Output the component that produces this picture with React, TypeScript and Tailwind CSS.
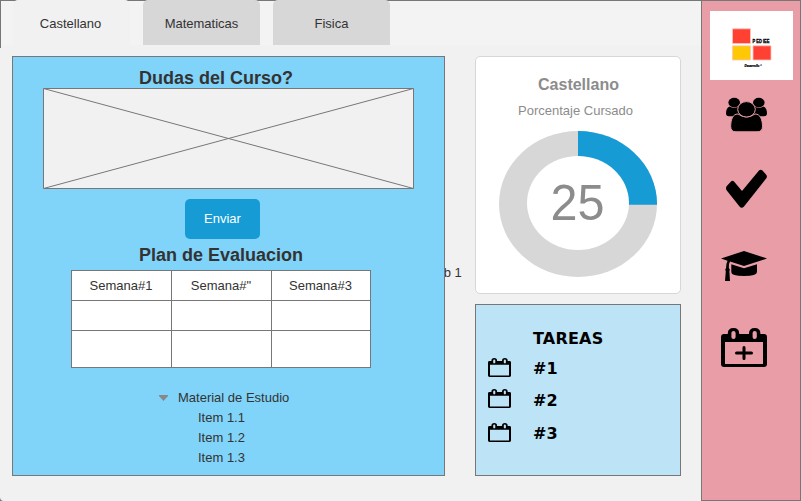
const tabs = ["Castellano", "Matematicas", "Fisica"];
const headings = ["Semana#1", 'Semana#"', "Semana#3"];
const items = ["Item 1.1", "Item 1.2", "Item 1.3"];

function CalendarIcon({ className, plus = false }: { className: string; plus?: boolean }) {
  return (
    <svg className={className} viewBox="0 0 46 39" preserveAspectRatio="none">
      <path
        fillRule="evenodd"
        d="M3 6H6.8V5.5Q6.8 0 12.5 0T18.2 5.5V6H28V5.5Q28 0 33.7 0T39.4 5.5V6H43Q46 6 46 9V36Q46 39 43 39H3Q0 39 0 36V9Q0 6 3 6ZM4 14V36H42V14ZM10.4 5V9Q10.4 11 12.5 11T14.6 9V5Q14.6 3 12.5 3T10.4 5ZM31.6 5V9Q31.6 11 33.7 11T35.8 9V5Q35.8 3 33.7 3T31.6 5Z"
      />
      {plus && <path d="M23 19.5V30.5M15.5 25H30.5" stroke="black" strokeWidth="3" strokeLinecap="round" />}
    </svg>
  );
}

function UsersIcon() {
  return (
    <svg className="h-[35px] w-[41px]" viewBox="0 0 41 35">
      <ellipse cx="8.2" cy="5.6" rx="5.8" ry="4.9" />
      <ellipse cx="32.8" cy="5.6" rx="5.8" ry="4.9" />
      <path d="M3.5 9.6Q8 12.4 12.5 9.6L17 14V19.3H3Q0 19 0 16.5Q0 11 3.5 9.6ZM37.5 9.6Q33 12.4 28.5 9.6L24 14V19.3H38Q41 19 41 16.5Q41 11 37.5 9.6Z" />
      <g stroke="#e99da7" strokeWidth="1">
        <path d="M12 17Q20.5 23 29 17C34.5 17 36.5 23 36.5 29.5Q36.5 34.8 31 34.8H10Q4.7 34.8 4.7 29.5C4.7 23 6.5 17 12 17Z" />
        <ellipse cx="20.5" cy="12.3" rx="8.8" ry="7.7" />
      </g>
    </svg>
  );
}

function Logo() {
  return (
    <div className="mt-[10px] h-[69px] w-[83px] bg-white">
      <svg className="h-[69px] w-[83px]" viewBox="0 0 83 69">
        <g stroke="#ffc5bd" strokeWidth="0.8">
          <path fill="#ff4134" d="M22.5 17.8H40.5V32.5H22.5ZM43 34.8H61V49H43Z" />
          <path fill="#ffc805" d="M22.5 34.8H40.5V49H22.5Z" />
        </g>
        <text x="42.5" y="32" textLength="17" lengthAdjust="spacingAndGlyphs" className="font-['Liberation_Sans'] text-[5px] font-bold" stroke="black" strokeWidth="0.3">P ED IEE</text>
        <text x="34.5" y="55.5" textLength="17" lengthAdjust="spacingAndGlyphs" className="font-['Liberation_Sans'] text-[3px] font-bold italic" stroke="black" strokeWidth="0.2">Desarrollo °</text>
      </svg>
    </div>
  );
}

function CoursePanel() {
  return (
    <section className="z-10 flex h-[420px] w-[433px] flex-col border border-[#777] bg-[#81d4f9]">
      <h2 className="ml-[126px] mt-[11px] h-5 text-[18px] leading-5 font-bold">Dudas del Curso?</h2>
      <svg className="ml-[30px] block h-[101px] w-[371px] bg-[#f1f1f1]" viewBox="0 0 371 101" fill="none" stroke="#777">
        <path d="M.5 .5H370.5V100.5H.5ZL370.5 100.5M370.5 .5L.5 100.5" />
      </svg>
      <button className="ml-[172px] mt-[10px] h-10 w-[75px] rounded-[5px] bg-[#169bd5] text-white">Enviar</button>
      <h2 className="ml-[126px] mt-[6px] h-5 text-[18px] leading-5 font-bold">Plan de Evaluacion</h2>
      <div className="ml-[58px] mt-[5px] grid h-[98px] w-[300px] grid-cols-[100px_100px_99px] grid-rows-[30px_30px_37px] border-l border-t border-[#777] bg-white text-center leading-[29px]">
        {headings.map((heading) => (
          <div key={heading} className="border-b border-r border-[#777] pr-px">{heading}</div>
        ))}
        {[0, 1, 2, 3, 4, 5].map((cell) => (
          <div key={cell} className="border-b border-r border-[#777]" />
        ))}
      </div>
      <div className="ml-[146px] mt-5 flex h-5 items-center leading-5">
        <svg className="mr-[10px] h-[6px] w-[9px] fill-[#888]" viewBox="0 0 9 6"><path d="M0 0H9V1L4.5 6L0 1Z" /></svg>
        Material de Estudio
      </div>
      <ul className="ml-[185px] leading-5">{items.map((item) => <li key={item}>{item}</li>)}</ul>
    </section>
  );
}

function ProgressCard() {
  return (
    <section className="h-[238px] w-[206px] rounded-[5px] border border-[#d7d7d7] bg-white text-center text-[#8c8c8c]">
      <h3 className="mt-[18px] ml-px h-5 text-[16px] leading-5 font-bold">Castellano</h3>
      <p className="-ml-[5px] mt-[6px] h-5 leading-5">Porcentaje Cursado</p>
      <svg className="ml-[23px] mt-[10px] block h-[146px] w-[158px]" viewBox="0 0 158 146">
        <ellipse cx="79" cy="73" rx="79" ry="73" fill="#d7d7d7" />
        <path d="M79 0A79 73 0 0 1 158 73.7H79Z" fill="#169bd5" />
        <ellipse cx="79" cy="72" rx="51" ry="47" fill="white" />
        <text x="78.5" y="89" textAnchor="middle" fill="#8c8c8c" textLength="54" lengthAdjust="spacingAndGlyphs" className="text-[50px]">25</text>
      </svg>
    </section>
  );
}

export default function App() {
  return (
    <main className="flex h-[501px] w-[801px] overflow-hidden bg-[#f1f1f1] font-['Liberation_Sans',sans-serif] text-[13px] text-[#333]">
      <div className="flex w-[701px] flex-col rounded-bl-[4px] bg-[#f1f1f1]">
        <nav className="flex h-[45px] gap-[13px] bg-[linear-gradient(#777_1px,#f3f3f3_1px)]">
          <div className="-mr-px -mb-[3px] w-px bg-[#777]" />
          {tabs.map((tab, i) => (
            <div key={tab} className={i === 0 ? "w-[117px] rounded-t-[5px] bg-[#f1f1f1] pr-[2px] text-center leading-[47px]" : "w-[117px] rounded-t-[5px] bg-[#d7d7d7] text-center leading-[47px]"}>{tab}</div>
          ))}
        </nav>
        <div className="ml-3 mt-[11px] flex">
          <CoursePanel />
          <div className="-ml-[15px] mt-[207px] h-5 w-[45px] leading-5 whitespace-nowrap">Tab 1</div>
          <div className="flex flex-col gap-[10px]">
            <ProgressCard />
            <section className="h-[172px] w-[206px] border border-[#777] bg-[#bce3f6] font-['DejaVu_Sans',sans-serif] text-[16px] leading-5 font-bold text-black">
              <h3 className="ml-[57px] mt-6 tracking-[0.2px]">TAREAS</h3>
              <div className="ml-3 mt-[10px] flex h-5 items-center"><CalendarIcon className="mr-[22px] mb-[3px] h-[19px] w-[23px]" />#1</div>
              <div className="ml-3 mt-[12px] flex h-5 items-center"><CalendarIcon className="mr-[22px] mb-[5px] h-[19px] w-[23px]" />#2</div>
              <div className="ml-3 mt-[13px] flex h-5 items-center"><CalendarIcon className="mr-[22px] mb-[3px] h-[19px] w-[23px]" />#3</div>
            </section>
          </div>
        </div>
        <svg className="mt-auto h-1 w-1 fill-[#777]" viewBox="0 0 4 4"><path d="M0 0Q0 4 4 4H0Z" /></svg>
      </div>
      <aside className="flex w-[100px] flex-col border border-[#777] bg-[#e99da7] pl-2">
        <Logo />
        <div className="ml-4 mt-[17px] h-[35px]"><UsersIcon /></div>
        <svg className="ml-4 mt-[37px] h-[39px] w-[41px]" viewBox="0 0 41 39">
          <path d="M.8 17L5 12.4Q6.5 11.2 8 12.6L16 22L33 1.5Q34.5 0 36.5 1.5L40 5.5Q41.5 7.2 40.5 9L18 37.5Q15.7 40 13.5 37.5L.8 21.5Q-.8 19 .8 17Z" />
        </svg>
        <svg className="ml-[11px] mt-[43px] h-[30px] w-[46px]" viewBox="0 0 46 30">
          <path d="M23 0L46 7.5L23 15L9 10.5Q7.5 13 8 17.5Q9.5 18.5 8.4 20L9 30H4L4.8 20Q3.5 18.5 5 17.5Q5 12.5 6.5 9.7L0 7.5ZM10.3 13.3L23 17.3L36 13.3V21Q36 25 23 25T10.3 21Z" />
        </svg>
        <CalendarIcon className="ml-[11px] mt-[47px] h-[39px] w-[46px]" plus />
      </aside>
    </main>
  );
}
